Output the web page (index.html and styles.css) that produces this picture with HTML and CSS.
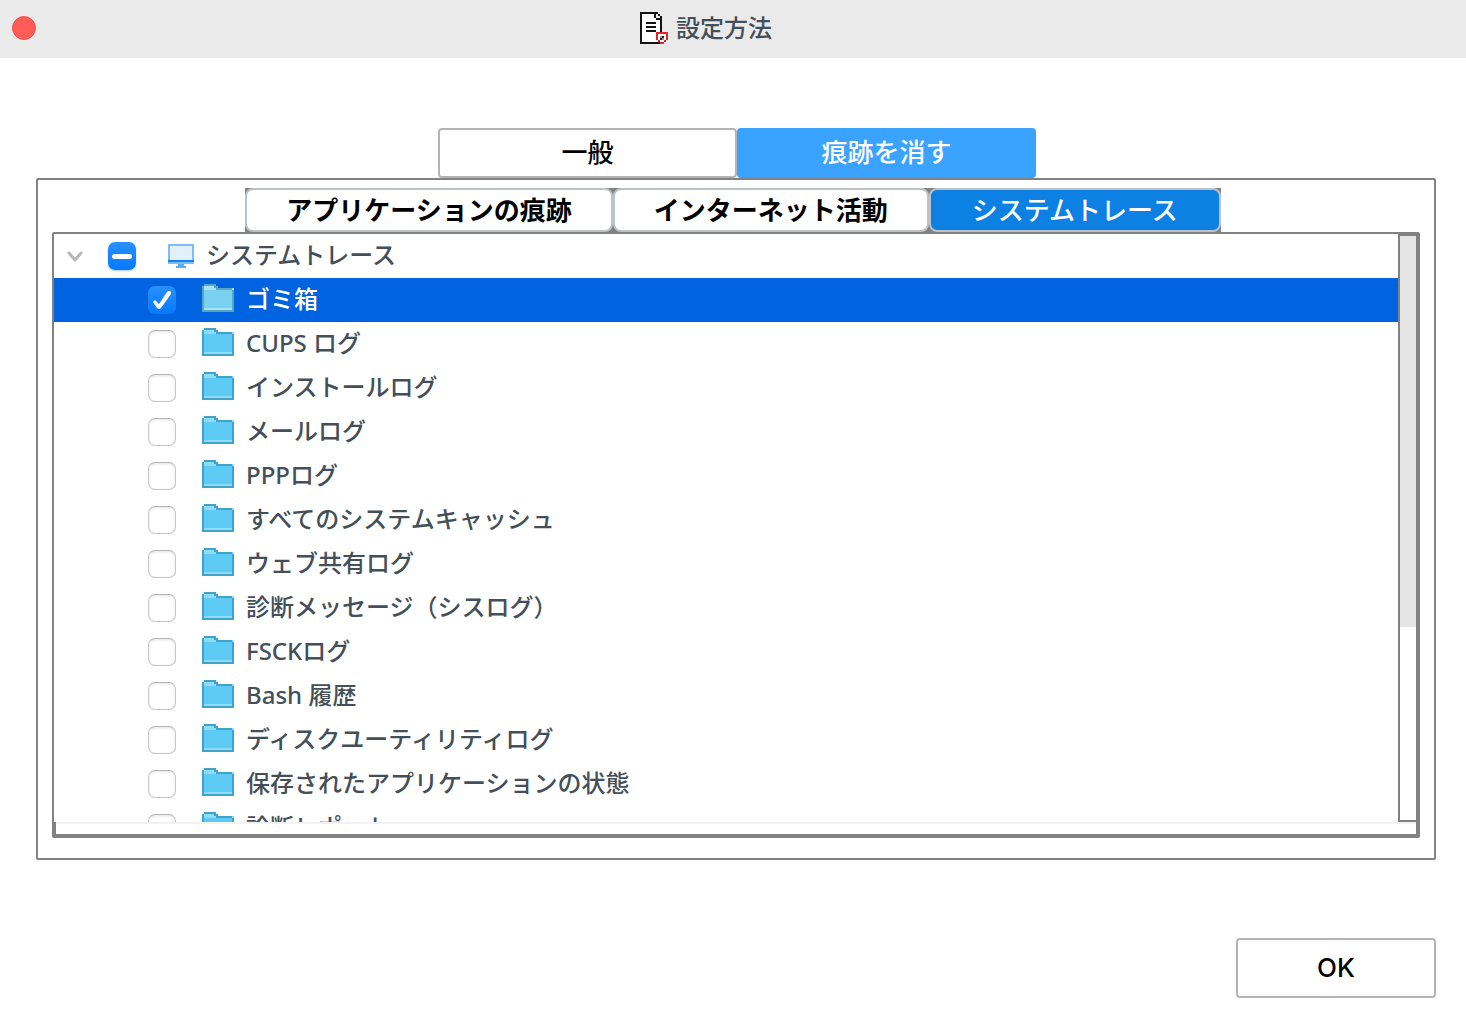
FILE: index.html
```html
<!DOCTYPE html>
<html lang="ja">
<head>
<meta charset="utf-8">
<title>設定方法</title>
<link rel="stylesheet" href="styles.css">
</head>
<body>
<svg width="0" height="0" class="defs" aria-hidden="true">
  <symbol id="folder" viewBox="0 0 32 32">
    <path class="folder-edge" d="M0 2h2V0h12v2h2v2h16v24H0z"/>
    <path class="folder-tab" d="M2 2h10v2h2v2H2z"/>
    <path class="folder-body" d="M2 6h28v18H2z"/>
    <path class="folder-tab" d="M2 24h28v2H2zM30 4h2v2h-2z"/>
  </symbol>
</svg>
<div class="window">
  <header class="titlebar">
    <button class="close" type="button" aria-label="閉じる"></button>
    <h1 class="title">
      <svg class="title-icon" viewBox="0 0 28 32" shape-rendering="crispEdges" aria-hidden="true">
        <path fill="#fff" d="M2 2h14v5h6v23H2z"/>
        <path fill="#141414" d="M0 0h18v2H2v28h18v2H0zM14 2h2v4h6v14h-2V8h-4V6h-2zM18 2h2v2h-2zM20 4h2v2h-2zM6 10h10v2H6zM6 14h10v2H6zM6 18h10v2H6z"/>
        <path fill="#fff" d="M18 22h8v6h-2v2h-4v-2h-2z"/>
        <path fill="#e52328" d="M16 20h12v8h-2v-6h-8v6h-2zM18 28h2v2h-2zM24 28h2v2h-2zM20 30h4v2h-4z"/>
        <path fill="#222" d="M22 24h2v2h-2zM20 26h2v2h-2z"/>
        <path fill="#999" d="M20 24h2v2h-2zM22 26h2v2h-2z"/>
      </svg>
      <span>設定方法</span>
    </h1>
  </header>
  <main class="content">
    <nav class="tabs">
      <button class="tab" type="button">一般</button>
      <button class="tab tab-active" type="button">痕跡を消す</button>
    </nav>
    <section class="panel">
      <nav class="subtabs">
        <button class="subtab" type="button">アプリケーションの痕跡</button>
        <button class="subtab" type="button">インターネット活動</button>
        <button class="subtab subtab-active" type="button">システムトレース</button>
      </nav>
      <div class="tree">
        <div class="tree-view">
          <ul class="list">
            <li class="row root">
              <svg class="chevron" viewBox="0 0 16 12" aria-hidden="true"><path d="M2 3l6 7 6-7"/></svg>
              <input class="check mixed" type="checkbox" id="c0">
              <svg class="monitor" viewBox="0 0 26 28" shape-rendering="crispEdges" aria-hidden="true">
                <path fill="#7cbcf8" d="M0 2h26v20H0z"/><path fill="#e1f0fa" d="M2 4h22v14H2z"/><path fill="#1484f4" d="M0 18h26v2H0z"/><path fill="#5cacf4" d="M10 22h6v2h2v2H8v-2h2z"/>
              </svg>
              <label for="c0">システムトレース</label>
            </li>
            <li class="row selected"><input class="check" type="checkbox" id="c1" checked><svg class="folder"><use href="#folder"/></svg><label for="c1">ゴミ箱</label></li>
            <li class="row"><input class="check" type="checkbox" id="c2"><svg class="folder"><use href="#folder"/></svg><label for="c2">CUPS ログ</label></li>
            <li class="row"><input class="check" type="checkbox" id="c3"><svg class="folder"><use href="#folder"/></svg><label for="c3">インストールログ</label></li>
            <li class="row"><input class="check" type="checkbox" id="c4"><svg class="folder"><use href="#folder"/></svg><label for="c4">メールログ</label></li>
            <li class="row"><input class="check" type="checkbox" id="c5"><svg class="folder"><use href="#folder"/></svg><label for="c5">PPPログ</label></li>
            <li class="row"><input class="check" type="checkbox" id="c6"><svg class="folder"><use href="#folder"/></svg><label for="c6">すべてのシステムキャッシュ</label></li>
            <li class="row"><input class="check" type="checkbox" id="c7"><svg class="folder"><use href="#folder"/></svg><label for="c7">ウェブ共有ログ</label></li>
            <li class="row"><input class="check" type="checkbox" id="c8"><svg class="folder"><use href="#folder"/></svg><label for="c8">診断メッセージ（シスログ）</label></li>
            <li class="row"><input class="check" type="checkbox" id="c9"><svg class="folder"><use href="#folder"/></svg><label for="c9">FSCKログ</label></li>
            <li class="row"><input class="check" type="checkbox" id="c10"><svg class="folder"><use href="#folder"/></svg><label for="c10">Bash 履歴</label></li>
            <li class="row"><input class="check" type="checkbox" id="c11"><svg class="folder"><use href="#folder"/></svg><label for="c11">ディスクユーティリティログ</label></li>
            <li class="row"><input class="check" type="checkbox" id="c12"><svg class="folder"><use href="#folder"/></svg><label for="c12">保存されたアプリケーションの状態</label></li>
            <li class="row"><input class="check" type="checkbox" id="c13"><svg class="folder"><use href="#folder"/></svg><label for="c13">診断レポート</label></li>
          </ul>
          <div class="scrollbar"><div class="thumb"></div></div>
        </div>
        <div class="tree-foot"></div>
      </div>
    </section>
    <footer class="actions"><button class="ok" type="button">OK</button></footer>
  </main>
</div>
</body>
</html>
```

FILE: styles.css
```css
* { box-sizing: border-box; }

body {
  margin: 0;
  background: #fff;
  color: #434f59;
  font-family: "Noto Sans", "Noto Sans CJK JP", sans-serif;
  font-size: 24px;
  font-weight: 500;
}

button { margin: 0; padding: 0; font: inherit; }

.defs { position: absolute; }

.window { display: flex; flex-direction: column; height: 100vh; }

.titlebar {
  display: flex;
  align-items: center;
  flex: none;
  height: 58px;
  padding: 0 90px 2px 12px;
  background: #eaeaea;
}

.close {
  width: 24px;
  height: 24px;
  border: 1px solid #f0504c;
  border-radius: 50%;
  background: #ff5b57;
}

.title {
  display: flex;
  flex: 1;
  align-items: center;
  justify-content: center;
  gap: 8px;
  margin: 0;
  font-size: 24px;
  font-weight: 500;
  line-height: 32px;
}

.title-icon { width: 28px; height: 32px; }

.content {
  display: flex;
  flex: 1;
  flex-direction: column;
  min-height: 0;
  padding: 70px 30px 38px 36px;
}

.tabs { display: flex; flex: none; justify-content: center; padding-left: 2px; }

.tab {
  width: 299px;
  height: 50px;
  padding-bottom: 2px;
  border: 2px solid #b4b4b4;
  border-radius: 4px;
  background: #fff;
  color: #000;
  font-size: 26px;
  line-height: 32px;
}

.tab-active { border-color: #3aa3ff; background: #3aa3ff; color: #fff; }

.panel {
  display: flex;
  flex: 1;
  flex-direction: column;
  min-height: 0;
  padding: 8px 14px 20px;
  border: 2px solid #828282;
  border-radius: 2px;
}

.subtabs {
  display: flex;
  flex: none;
  align-self: center;
  margin-right: 6px;
  background: #828282;
}

.subtab {
  height: 44px;
  padding: 0 39px;
  border: 2px solid #bcc2c7;
  border-radius: 8px;
  background: #fff;
  color: #000;
  font-size: 26px;
  font-weight: 700;
  line-height: 32px;
}

.subtab-active { padding: 0 41px; background: #0d80e4; color: #fff; font-weight: 500; }

.tree {
  display: flex;
  flex: 1;
  flex-direction: column;
  min-height: 0;
  border: 2px solid #828282;
  border-radius: 2px;
}

.tree-view { display: flex; flex: 1; min-height: 0; }

.list {
  flex: 1;
  margin: 0;
  padding: 0;
  overflow: hidden;
  list-style: none;
}

.row {
  display: flex;
  align-items: center;
  height: 44px;
  padding-left: 94px;
  line-height: 32px;
}

.row label { padding-bottom: 2px; }

.root { padding-left: 13px; }

.selected { background: #0064e1; color: #fff; }

.chevron {
  width: 16px;
  height: 12px;
  margin-right: 25px;
  fill: none;
  stroke: #b8b8b8;
  stroke-width: 3;
  stroke-linecap: round;
  stroke-linejoin: round;
}

.check {
  flex: none;
  width: 28px;
  height: 28px;
  margin: 0;
  appearance: none;
  border: 1px solid #c6c6c6;
  border-top-color: #b4b4b4;
  border-radius: 7px;
  background: #fff;
  box-shadow: inset 0 1px 3px #e2e2e2;
}

.check:checked,
.mixed {
  border: 0;
  background: linear-gradient(#2a90ff, #047aff);
  box-shadow: none;
}

.check:checked::before {
  content: "";
  display: block;
  width: 28px;
  height: 28px;
  background: #fff;
  clip-path: path("M5 16L7 14L11 18L19 6Q21 4 23 6L23 8L13 22Q11 24 9 22Z");
}

.mixed { padding: 12px 4px; box-shadow: 0 1px 2px #a9cdf8; }

.mixed::before {
  content: "";
  display: block;
  height: 5px;
  border-radius: 3px;
  background: #fff;
}

.monitor { width: 26px; height: 28px; margin: 0 12px 0 32px; }

.folder {
  width: 32px;
  height: 32px;
  margin: 0 12px 0 26px;
  shape-rendering: crispEdges;
}

.folder-edge { fill: #40a3cb; }
.folder-tab { fill: #8fdcfa; }
.folder-body { fill: #5dcbf4; }
.selected .folder-edge,
.selected .folder { color: #5fb4da; }
.selected .folder { filter: brightness(1.05) saturate(0.75); }

.scrollbar { width: 20px; border: 2px solid #828282; }

.thumb { height: 67%; background: #e5e5e5; }

.tree-foot {
  flex: none;
  height: 14px;
  border: solid #828282;
  border-width: 0 2px 2px;
  box-shadow: inset 0 2px #f2f2f2;
}

.actions { display: flex; flex: none; justify-content: flex-end; margin-top: 78px; }

.ok {
  width: 200px;
  height: 60px;
  border: 2px solid #b4b4b4;
  border-radius: 4px;
  background: #fff;
  color: #000;
  font-family: Inter, "Liberation Sans", sans-serif;
  font-size: 26px;
  line-height: 32px;
}
```
